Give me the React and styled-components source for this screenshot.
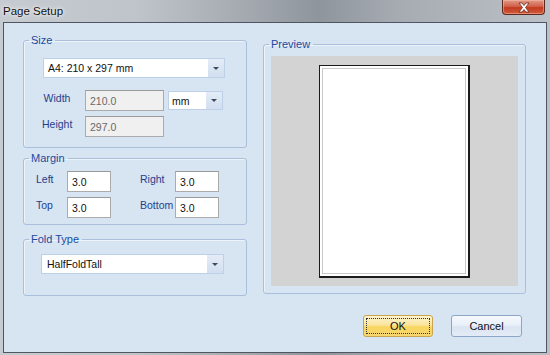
import styled, { createGlobalStyle } from "styled-components";

const GlobalStyle = createGlobalStyle`
  html, body {
    margin: 0;
    padding: 0;
    background: #8f959c;
  }
  * {
    box-sizing: border-box;
  }
`;

const Window = styled.div`
  width: 550px;
  height: 355px;
  display: flex;
  flex-direction: column;
  font-family: "Liberation Sans", Arial, sans-serif;
  background: linear-gradient(
    to right,
    #c6cbd1 0%,
    #bfc4ca 25%,
    #a4a9b0 45%,
    #8f959c 58%,
    #a6abb2 72%,
    #bcc1c7 100%
  );
  padding: 0 3px 2px 3px;
`;

const TitleBar = styled.div`
  height: 22px;
  flex: none;
  display: flex;
  align-items: flex-start;
  justify-content: space-between;
  padding-right: 1px;
`;

const Title = styled.span`
  font-size: 11.5px;
  color: #111;
  padding-top: 5px;
  text-shadow: 0 0 6px rgba(255, 255, 255, 0.9), 0 0 3px rgba(255, 255, 255, 0.9);
`;

const CloseButton = styled.div`
  width: 43px;
  height: 15px;
  margin-right: 1px;
  border: 1px solid #5e2a20;
  border-top: none;
  border-radius: 0 0 4px 4px;
  background: linear-gradient(to bottom, #e09a88 0%, #d2624b 45%, #c23a1f 55%, #cf5c3e 100%);
  box-shadow: inset 0 0 0 1px rgba(255, 200, 180, 0.45);
  display: flex;
  align-items: center;
  justify-content: center;
`;

const Client = styled.div`
  flex: 1;
  border: 1px solid #4f565f;
  background: #d7e4f2;
  display: flex;
  flex-direction: column;
  padding: 11px 19px 0 19px;
  font-size: 10.5px;
`;

const TopRow = styled.div`
  display: flex;
  gap: 16px;
  align-items: flex-start;
`;

const LeftColumn = styled.div`
  width: 224px;
  display: flex;
  flex-direction: column;
`;

const Group = styled.fieldset`
  margin: ${(p) => p.$mt || 0}px 0 0 0;
  width: ${(p) => p.$w || 224}px;
  height: ${(p) => p.$h}px;
  border: 1px solid #a9bfdc;
  border-radius: 3px;
  padding: 0 0 0 5px;
  min-width: 0;
  display: flex;
  flex-direction: column;
  box-shadow: inset 1px 1px 0 rgba(255, 255, 255, 0.55);
`;

const Legend = styled.legend`
  color: #1c4a9e;
  font-size: 11px;
  line-height: 12px;
  padding: 0 3px 0 2px;
  margin: 0;
`;

const GroupBody = styled.div`
  flex: 1;
  display: flex;
  flex-direction: column;
  align-items: flex-start;
  padding: ${(p) => p.$pad};
`;

const Select = styled.div`
  width: ${(p) => p.$w}px;
  height: ${(p) => p.$h || 20}px;
  background: #fff;
  border: 1px solid #bdd0e7;
  display: flex;
  align-items: stretch;
  flex: none;
`;

const SelectValue = styled.span`
  flex: 1;
  padding-left: ${(p) => p.$pl || 4}px;
  display: flex;
  align-items: center;
  color: #111;
  font-size: 10.5px;
`;

const SelectArrow = styled.span`
  width: 16px;
  background: linear-gradient(to bottom, #e4ecf7, #d2dff0);
  display: flex;
  align-items: center;
  justify-content: center;
  &::after {
    content: "";
    border-left: 3px solid transparent;
    border-right: 3px solid transparent;
    border-top: 3px solid #3d4b60;
  }
`;

const SizeGrid = styled.div`
  margin-top: 12px;
  margin-left: -1px;
  display: grid;
  grid-template-columns: 30px 79px 55px;
  column-gap: 13px;
  row-gap: 5px;
  align-items: start;
`;

const FieldLabel = styled.span`
  color: #1f3f8c;
  font-size: 10.5px;
  text-align: ${(p) => (p.$center ? "center" : "left")};
  white-space: nowrap;
  padding-top: 2px;
`;

const TextBox = styled.div`
  width: ${(p) => p.$w}px;
  height: 21px;
  border: 1px solid #ababab;
  border-top-color: #9a9a9a;
  background: ${(p) => (p.$disabled ? "#f0f0f0" : "#fff")};
  color: ${(p) => (p.$disabled ? "#6a6a6a" : "#111")};
  display: flex;
  align-items: center;
  padding-left: 4px;
  font-size: 10.5px;
`;

const UnitSelect = styled(Select)`
  margin-left: -9px;
  margin-top: 1px;
`;

const MarginGrid = styled.div`
  display: grid;
  grid-template-columns: 31px 44px 64px 44px;
  row-gap: 5px;
  align-items: start;
  & > :nth-child(4n + 3) {
    padding-left: 29px;
  }
`;

const Preview = styled.div`
  flex: 1;
  align-self: stretch;
  background: #d3d3d3;
  display: flex;
  align-items: center;
  justify-content: center;
`;

const Page = styled.div`
  width: 151px;
  height: 213px;
  background: #fff;
  border: 1px solid #1b1b1b;
  border-right-width: 2px;
  border-bottom-width: 2px;
  padding: 2px;
  display: flex;
`;

const PageInner = styled.div`
  flex: 1;
  border: 1px solid #c9c9c9;
`;

const ButtonRow = styled.div`
  margin-top: 19px;
  display: flex;
  justify-content: flex-end;
  gap: 18px;
  padding-right: 5px;
`;

const Button = styled.div`
  width: ${(p) => p.$w}px;
  height: 22px;
  border-radius: 3px;
  border: 1px solid ${(p) => (p.$primary ? "#c9a550" : "#8ea6c6")};
  background: ${(p) =>
    p.$primary
      ? "linear-gradient(to bottom, #fdf3cf 0%, #fbe59c 45%, #f8d65e 55%, #f7d870 100%)"
      : "linear-gradient(to bottom, #f6f9fd 0%, #e9f0f9 45%, #dae5f3 55%, #e3ebf6 100%)"};
  display: flex;
  align-items: center;
  justify-content: center;
  padding: 2px;
  color: #111;
  font-size: 11px;
`;

const FocusRing = styled.div`
  flex: 1;
  align-self: stretch;
  border: 1px dotted #333;
  display: flex;
  align-items: center;
  justify-content: center;
`;

const CloseIcon = () => (
  <svg width="14" height="11" viewBox="0 0 14 11">
    <path
      d="M2 1 L5 1 L7 3.5 L9 1 L12 1 L8.5 5.5 L12 10 L9 10 L7 7.5 L5 10 L2 10 L5.5 5.5 Z"
      fill="#fff"
      stroke="#6b2a1c"
      strokeWidth="0.8"
      strokeLinejoin="round"
    />
  </svg>
);

export default function App() {
  return (
    <>
      <GlobalStyle />
      <Window>
        <TitleBar>
          <Title>Page Setup</Title>
          <CloseButton>
            <CloseIcon />
          </CloseButton>
        </TitleBar>
        <Client>
          <TopRow>
            <LeftColumn>
              <Group $h={114}>
                <Legend>Size</Legend>
                <GroupBody $pad="12px 0 0 14px">
                  <Select $w={182}>
                    <SelectValue>A4: 210 x 297 mm</SelectValue>
                    <SelectArrow />
                  </Select>
                  <SizeGrid>
                    <FieldLabel $center>Width</FieldLabel>
                    <TextBox $w={79} $disabled>210.0</TextBox>
                    <UnitSelect $w={55} $h={19}>
                      <SelectValue $pl={3}>mm</SelectValue>
                      <SelectArrow />
                    </UnitSelect>
                    <FieldLabel $center>Height</FieldLabel>
                    <TextBox $w={79} $disabled>297.0</TextBox>
                  </SizeGrid>
                </GroupBody>
              </Group>
              <Group $h={73} $mt={4}>
                <Legend>Margin</Legend>
                <GroupBody $pad="7px 0 0 7px">
                  <MarginGrid>
                    <FieldLabel>Left</FieldLabel>
                    <TextBox $w={44}>3.0</TextBox>
                    <FieldLabel>Right</FieldLabel>
                    <TextBox $w={44}>3.0</TextBox>
                    <FieldLabel>Top</FieldLabel>
                    <TextBox $w={44}>3.0</TextBox>
                    <FieldLabel>Bottom</FieldLabel>
                    <TextBox $w={44}>3.0</TextBox>
                  </MarginGrid>
                </GroupBody>
              </Group>
              <Group $h={63} $mt={8}>
                <Legend>Fold Type</Legend>
                <GroupBody $pad="9px 0 0 12px">
                  <Select $w={183}>
                    <SelectValue $pl={5}>HalfFoldTall</SelectValue>
                    <SelectArrow />
                  </Select>
                </GroupBody>
              </Group>
            </LeftColumn>
            <Group $w={263} $h={256} $mt={4}>
              <Legend>Preview</Legend>
              <GroupBody $pad="6px 7px 7px 2px">
                <Preview>
                  <Page>
                    <PageInner />
                  </Page>
                </Preview>
              </GroupBody>
            </Group>
          </TopRow>
          <ButtonRow>
            <Button $w={70} $primary>
              <FocusRing>OK</FocusRing>
            </Button>
            <Button $w={71}>Cancel</Button>
          </ButtonRow>
        </Client>
      </Window>
    </>
  );
}
